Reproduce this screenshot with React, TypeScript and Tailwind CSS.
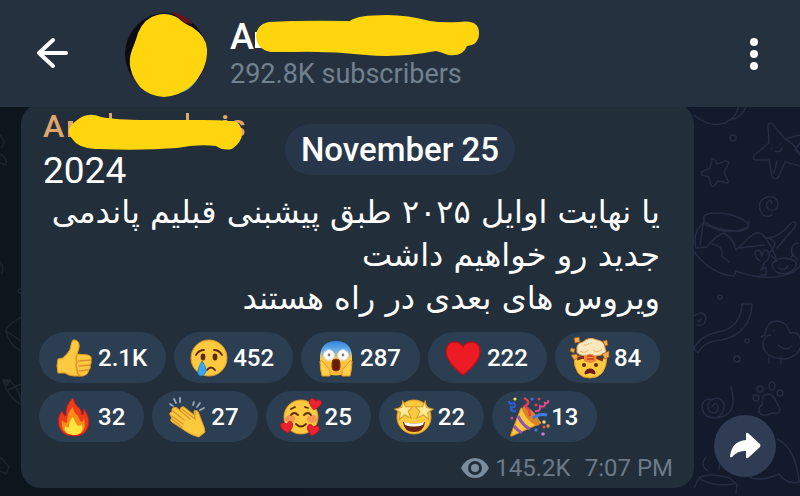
import type { ReactNode } from "react";

const Emoji = ({ children }: { children: ReactNode }) => (
  <svg viewBox="0 0 38 38" className="size-[38px] shrink-0 overflow-visible" aria-hidden="true">
    {children}
  </svg>
);

const gold = "#fcc93f";
const edge = "#e59a24";
const brown = "#5c2b12";

const Thumb = () => (
  <Emoji>
    <path d="M3 20Q8 20 11 16Q16 11 16 6Q17 0 20 1Q25 2 24 9Q23 13 22 15L33 16Q37 17 36 21Q37 24 35 26Q36 29 34 31Q33 36 28 37L19 37Q14 37 10 34L3 34Q1 27 3 20Z" fill={gold} stroke={edge} strokeWidth="1" />
    <path d="M35 21L24 22M35 26L24 27M33 31L24 32M22 16Q20 20 22 23Q20 27 22 29Q21 34 25 37" stroke="#dc8f2a" strokeWidth="1.4" fill="none" strokeLinecap="round" />
  </Emoji>
);

const Cry = () => (
  <Emoji>
    <circle cx="19" cy="19" r="18" fill={gold} stroke={edge} strokeWidth="1" />
    <path d="M6 16Q9 11 14 11M24 11Q29 11 32 16" stroke={brown} strokeWidth="1.8" fill="none" strokeLinecap="round" />
    <ellipse cx="13" cy="18" rx="2.4" ry="3.4" fill={brown} />
    <ellipse cx="25" cy="18" rx="2.4" ry="3.4" fill={brown} />
    <path d="M17 31Q21 26 25 31" stroke={brown} strokeWidth="2" fill="none" strokeLinecap="round" />
    <path d="M12 22Q17 29 16 33Q14 37 11 37Q7 36 8 31Q9 27 12 22Z" fill="#3da5e8" stroke="#1c7fc0" strokeWidth="0.8" />
  </Emoji>
);

const Scream = () => (
  <Emoji>
    <defs>
      <linearGradient id="scream" x1="0" y1="0" x2="0" y2="1">
        <stop offset="0" stopColor="#2f86e4" />
        <stop offset="0.28" stopColor="#6daee8" />
        <stop offset="0.5" stopColor="#fbc94a" />
        <stop offset="1" stopColor="#f9b934" />
      </linearGradient>
    </defs>
    <path d="M19 2Q33 2 35 16Q36 26 29 34Q19 39 9 34Q2 26 3 16Q5 2 19 2Z" fill="url(#scream)" />
    <circle cx="12" cy="16" r="5.3" fill="#fff" stroke="#d6dfe5" />
    <circle cx="26" cy="16" r="5.3" fill="#fff" stroke="#d6dfe5" />
    <circle cx="12" cy="16" r="1.4" fill="#8a7a70" />
    <circle cx="26" cy="16" r="1.4" fill="#8a7a70" />
    <rect x="15" y="20" width="8" height="12" rx="4" fill="#651d0c" stroke="#923413" />
    <path d="M3 22Q6 21 7 24L10 28Q13 29 13 33L13 37L5 37Q3 30 3 22ZM35 22Q32 21 31 24L28 28Q25 29 25 33L25 37L33 37Q35 30 35 22Z" fill="#ffcf4c" stroke={edge} strokeWidth="1" />
  </Emoji>
);

const Heart = () => (
  <Emoji>
    <path d="M19 36Q2 23 2 12Q3 3 11 3Q16 3 19 8Q22 3 28 3Q36 4 36 12Q36 23 19 36Z" fill="#ed1c24" stroke="#ba1119" strokeWidth="1.4" />
  </Emoji>
);

const Mindblown = () => (
  <Emoji>
    <path d="M3 18Q3 39 19 39Q35 39 36 18L29 21L24 17L16 20L9 17Z" fill={gold} stroke={edge} />
    <path d="M6 20L12 18L17 21L25 18L32 21" stroke="#7a2d12" strokeWidth="3" fill="none" />
    <path d="M13 14L26 14L25 22L20 24L13 22Z" fill="#f0863a" />
    <path d="M16 17L23 17M16 20L23 20" stroke="#ca3c22" strokeWidth="1.6" />
    <path d="M6 11Q5 4 12 3Q18-3 26 1Q34 2 34 9Q37 15 30 16Q24 18 19 15Q12 18 8 15Q5 14 6 11Z" fill="#fbe7be" stroke="#e0a052" />
    <path d="M9 12Q14 15 17 11M22 11Q27 15 31 10M13 6Q17 7 18 4" stroke="#edb76b" fill="none" />
    <path d="M3-1L8-2L9 3L4 4ZM32 2L36 1L37 6L34 7ZM0 9L4 10L3 14L-1 12ZM0 16L6 15L7 19L3 21ZM31 15L38 12L38 18L34 20Z" fill="#efae45" stroke="#a45418" strokeWidth="0.7" />
    <circle cx="13" cy="26" r="2" fill={brown} />
    <circle cx="25" cy="26" r="2" fill={brown} />
    <path d="M14 35Q14 30 19 30Q24 30 24 35Q19 32 14 35Z" fill="#701b14" stroke="#5b1410" />
  </Emoji>
);

const Fire = () => (
  <Emoji>
    <path d="M18 0Q19 6 25 11Q27 14 27 17Q29 16 29 11Q36 21 33 29Q30 38 19 38Q7 38 4 28Q2 19 7 13Q8 17 11 18Q10 7 18 0Z" fill="#ed3c1b" stroke="#c91b16" />
    <path d="M18 9Q18 14 23 18Q25 22 26 24Q29 23 29 20Q33 36 19 37Q5 36 7 22Q9 25 12 25Q12 14 18 9Z" fill="#fb8c16" />
    <path d="M18 19Q20 25 23 28Q26 28 27 26Q29 37 19 37Q8 36 10 28Q13 30 14 29Q14 23 18 19Z" fill="#ffe542" />
  </Emoji>
);

const Clap = () => (
  <Emoji>
    <path d="M4 11Q6 8 9 10L12 13Q12 8 16 9L26 17L26 13Q30 11 31 16L36 29L37 34L31 39Q23 37 19 34L4 24Q1 22 4 20L2 17Q1 14 4 14Z" fill={gold} stroke={edge} />
    <path d="M5 13L16 22M4 18L15 26M9 10L22 21M14 11L27 21Q26 16 28 14M4 21L14 29" stroke="#dd922e" strokeWidth="1.3" fill="none" strokeLinecap="round" />
    <path d="M2 6L5 8M6 1L8 5M12 0L12 4M25 7L26 4M29 9L32 5M32 12L36 10" stroke="#9aa9b6" strokeWidth="1.8" strokeLinecap="round" />
  </Emoji>
);

const smallHeart = "M0 6Q-7 1-6-3Q-4-7 0-3Q4-7 6-3Q7 1 0 6Z";

const Adore = () => (
  <Emoji>
    <circle cx="19" cy="19" r="17" fill={gold} stroke={edge} />
    <ellipse cx="8" cy="21" rx="5" ry="4" fill="#f4805b" opacity="0.7" />
    <ellipse cx="30" cy="21" rx="5" ry="4" fill="#f4805b" opacity="0.7" />
    <path d="M9 17Q12 13 16 17M22 17Q26 13 29 17M14 26Q19 31 24 26M9 11L13 9M23 9L26 10" stroke={brown} strokeWidth="1.8" fill="none" strokeLinecap="round" />
    <g fill="#ea2231" stroke="#b8101c" strokeWidth="0.7">
      <path d={smallHeart} transform="translate(33 6) rotate(12)" />
      <path d={smallHeart} transform="translate(5 29) rotate(-10)" />
      <path d={smallHeart} transform="translate(31 32) rotate(12)" />
    </g>
  </Emoji>
);

const star = "M0-9L2-3L9-2L4 2L6 9L0 5L-6 9L-4 2L-9-2L-2-3Z";

const StarStruck = () => (
  <Emoji>
    <circle cx="19" cy="19" r="17" fill={gold} stroke={edge} />
    <path d="M8 24Q19 27 30 24Q29 34 19 34Q9 34 8 24Z" fill="#6b210f" />
    <path d="M9 24Q19 27 29 24L28 27Q19 30 10 27Z" fill="#fff" />
    <g fill="#ffe995" stroke="#d79a25">
      <path d={star} transform="translate(9 12) rotate(-8)" />
      <path d={star} transform="translate(29 12) rotate(8)" />
    </g>
  </Emoji>
);

const Party = () => (
  <Emoji>
    <path d="M4 38Q2 39 3 36L13 10Q25 13 33 25Z" fill="#f9c73e" stroke="#df8c25" />
    <path d="M10 18Q15 28 22 31M6 28Q10 33 14 35" stroke="#9554ad" strokeWidth="3" fill="none" />
    <ellipse cx="23" cy="18" rx="12" ry="4.5" transform="rotate(48 23 18)" fill="#dd8128" />
    <path d="M22 18Q22 11 17 8Q24 4 16 0" stroke="#e34055" strokeWidth="2.5" fill="none" />
    <path d="M25 20Q31 15 39 17" stroke="#3e7ee2" strokeWidth="3" fill="none" />
    <path d="M8 13Q2 14 3 9Q9 10 6 5Q1 7 1 3" stroke="#315bd0" strokeWidth="2.3" fill="none" />
    <path d="M27 13Q33 14 32 8Q38 10 37 5Q41 6 40 2" stroke="#dc4889" strokeWidth="2.1" fill="none" />
    <g>
      <circle cx="7" cy="1" r="1.6" fill="#efe45e" />
      <circle cx="24" cy="1" r="1.5" fill="#4275dc" />
      <circle cx="31" cy="1" r="1.5" fill="#cb426b" />
      <circle cx="28" cy="7" r="1.5" fill="#e34055" />
      <circle cx="4" cy="20" r="1.6" fill="#c34793" />
      <circle cx="36" cy="24" r="1.8" fill="#e9d96b" />
      <circle cx="40" cy="28" r="1.7" fill="#e5943f" />
      <circle cx="36" cy="29" r="1.5" fill="#e05252" />
      <circle cx="28" cy="32" r="1.7" fill="#3c73dc" />
      <circle cx="35" cy="36" r="1.8" fill="#b87ad4" />
    </g>
  </Emoji>
);

const reactions = [
  [
    { name: "Thumbs up", count: "2.1K", icon: <Thumb /> },
    { name: "Crying", count: "452", icon: <Cry /> },
    { name: "Screaming", count: "287", icon: <Scream /> },
    { name: "Heart", count: "222", icon: <Heart /> },
    { name: "Mind blown", count: "84", icon: <Mindblown /> },
  ],
  [
    { name: "Fire", count: "32", icon: <Fire /> },
    { name: "Clapping", count: "27", icon: <Clap /> },
    { name: "Adoring", count: "25", icon: <Adore /> },
    { name: "Star-struck", count: "22", icon: <StarStruck /> },
    { name: "Party", count: "13", icon: <Party /> },
  ],
];

const RightDoodles = () => (
  <svg viewBox="0 0 106 388" className="absolute top-0 right-0 h-[388px] w-[106px]" fill="none" stroke="#252d43" strokeWidth="1.5" strokeLinecap="round" strokeLinejoin="round" aria-hidden="true">
    <path d="M0 8Q15 21 31 16Q43 10 44 0M37 13Q48 10 52 0" />
    <circle cx="39" cy="31" r="3" />
    <path d="M74 18Q77 14 80 19L91 32L106 28M74 18L75 36L60 48Q57 53 63 53L75 53L78 69Q81 75 85 69L91 55L106 59M91 32Q101 37 106 48M83 54L80 66" />
    <path d="M78 41L78 42M87 36L87 37M81 44Q87 46 88 41M106 36L101 43L106 47" />
    <path d="M18 52Q21 51 23 57L31 54Q36 54 34 58L30 65L34 74Q35 77 30 75L24 74L20 79Q17 81 16 75L15 70L8 68Q6 65 10 64L16 61Z" />
    <path d="M77 97Q79 93 75 94Q70 98 75 103Q83 105 84 97Q83 88 73 90Q62 94 67 105Q71 112 78 108" />
    <ellipse cx="32" cy="115" rx="23" ry="8" transform="rotate(11 32 115)" />
    <path d="M10 111Q8 118 15 119Q35 129 54 120L55 114M9 116Q-2 126 2 141L13 140Q22 128 30 126Q40 132 42 143L57 129Q66 121 73 133Q80 143 83 154M0 145Q19 168 40 169L42 164Q65 173 88 169Q100 166 106 159M18 137Q30 139 28 149L35 155M9 117L6 138M44 141L70 138M73 131Q85 131 97 116Q103 112 101 120L83 141M70 130Q88 133 76 145" />
    <path d="M66 154Q60 150 61 145Q66 140 68 149Q70 139 75 146Q76 152 70 156L67 163L72 160L72 168L66 168M104 153L98 147Q96 137 104 136M78 157Q86 147 101 154Q106 160 94 166Q80 169 78 157M81 152L78 149M97 151L99 147M85 161Q90 165 94 159" />
    <circle cx="26" cy="190" r="2" />
    <path d="M0 209Q9 202 12 211Q11 220 3 218M7 212Q4 217 4 213M0 242L4 246Q10 234 28 233Q57 226 58 197L48 197Q47 218 29 224Q5 228 0 242" />
    <path d="M67 230L71 228Q72 215 82 214Q93 214 96 226Q107 223 107 239Q104 250 91 252Q68 251 69 235Q71 228 77 228M80 223L80 224M84 238Q92 245 98 239M75 250L75 256M87 251L87 257" />
    <circle cx="53" cy="234" r="2" />
    <circle cx="43" cy="252" r="3" />
    <path d="M18 300Q22 293 24 300Q24 308 16 305Q11 298 17 293Q26 288 30 297Q31 307 22 311Q10 311 8 301Q8 292 16 292M22 311Q45 309 37 280" />
    <circle cx="66" cy="282" r="3" />
    <ellipse cx="78" cy="279" rx="3" ry="4" />
    <circle cx="86" cy="286" r="3" />
    <circle cx="62" cy="291" r="3" />
    <path d="M69 289Q76 284 81 292L86 302Q86 308 78 306Q69 311 65 305Q64 300 68 298Z" />
    <path d="M83 332Q102 341 105 375Q93 378 85 367Q60 378 50 365M0 381L5 371Q13 365 36 371L43 378L42 386M5 371Q16 380 40 377M14 364Q5 358 12 350M25 363Q25 354 31 352" />
  </svg>
);

const LeftDoodles = () => (
  <svg viewBox="0 0 24 388" className="absolute top-0 left-0 h-[388px] w-6" fill="none" stroke="#1c252e" strokeWidth="1.5" aria-hidden="true">
    <path d="M0 28Q7 35 1 41M0 47Q8 52 6 58L0 56M0 154Q5 162 1 167M24 209Q7 217 6 224Q9 238 21 244M6 224L21 234M3 273Q18 273 22 298M3 273Q8 291 22 298M8 283L21 277M0 350L9 360L6 367L0 364" />
    <path d="M3 273L10 273L6 280Z" fill="#1c252e" />
    <circle cx="20" cy="184" r="2" />
  </svg>
);

export default function App() {
  return (
    <div className="flex min-h-screen flex-col overflow-hidden bg-[#11192a] font-['Roboto',sans-serif] text-white">
      <header className="z-10 flex h-[107px] items-center bg-[#263140] pr-7 pl-9">
        <button aria-label="Back" className="size-9 shrink-0">
          <svg viewBox="0 0 36 36" className="size-9" fill="none" stroke="white" strokeWidth="4" strokeLinecap="round" strokeLinejoin="round">
            <path d="M17 4L3 17L17 30M3 17H30" />
          </svg>
        </button>
        <svg viewBox="0 0 84 86" className="ml-[52px] h-[86px] w-[84px] shrink-0" role="img" aria-label="Channel photo">
          <circle cx="42" cy="43" r="41" fill="#0d0c12" />
          <path d="M47 1Q61 3 69 13L61 12Z" fill="#65161b" />
          <path d="M75 66Q65 82 53 82Z" fill="#62b7a5" />
          <path d="M15 75Q8 68 6 59Z" fill="#4e2023" />
          <path d="M16 76Q25 85 40 86Q56 85 68 74Q84 58 83 38Q82 25 68 16Q59 12 54 7Q44 1 33 4Q20 7 14 22Q12 29 8 39Q1 57 16 76Z" fill="#ffd60d" />
        </svg>
        <div className="ml-[22px] min-w-0 flex-1">
          <h1 className="relative text-[36px] leading-10 font-medium">
            A
            <svg viewBox="0 0 228 44" className="absolute -top-0.5 left-6 h-11 w-[228px]" aria-hidden="true">
              <path d="M1 17h6v16h-6zM146 36h6l-2 4h-4z" fill="white" />
              <path d="M15 7Q48 5 96 6Q103 0 133 0Q154 0 176 6Q188 8 205 7Q225 4 225 18Q225 30 213 31Q209 42 194 40Q187 37 182 36Q145 43 112 40Q75 36 39 37L17 37Q3 35 2 21Q3 9 15 7Z" fill="#ffd60d" />
            </svg>
          </h1>
          <p className="text-[27px] leading-[34px] text-[#71818f]">292.8K subscribers</p>
        </div>
        <button aria-label="More options" className="flex h-9 w-9 shrink-0 flex-col items-center justify-between py-0.5">
          <span className="size-2 rounded-full bg-white" />
          <span className="size-2 rounded-full bg-white" />
          <span className="size-2 rounded-full bg-white" />
        </button>
      </header>

      <main className="relative flex flex-1 items-end bg-linear-to-r from-[#0e161d] from-5% to-[#121a2b] to-85% pr-6 pb-2 pl-[21px]">
        <LeftDoodles />
        <RightDoodles />
        <time className="absolute top-[17px] left-1/2 z-10 -translate-x-1/2 rounded-full bg-[#28364a] px-4 text-[33px] leading-[51px] font-medium whitespace-nowrap">November 25</time>

        <article className="relative -mt-1 mr-5 flex min-w-0 flex-1 flex-col rounded-[20px] bg-[#222e3a] px-[18px] pb-1">
          <div className="pr-4 pl-1">
            <h2 className="relative h-[47px] pt-0.5 text-[32px] leading-10 font-medium text-[#dfa66b]">
              A
              <span className="absolute top-0.5 left-[178px]">is</span>
              <svg viewBox="0 0 178 38" className="absolute top-2 left-[25px] h-[38px] w-[178px]" aria-hidden="true">
                <path d="M-1 9h6v16h-6zM41 1h3v9h-3zM118 1h3v9h-3z" fill="#dfa66b" />
                <path d="M8 9Q19-1 33 5Q48 8 78 8L135 8Q150 8 161 9Q171 8 173 16Q177 28 164 37Q155 39 148 34Q129 32 109 36Q70 39 32 37Q13 37 6 29Q-5 18 8 9Z" fill="#ffd60d" />
              </svg>
            </h2>
            <p className="text-[37px] leading-10">2024</p>
            <p dir="rtl" lang="fa" className="font-['DejaVu_Sans',sans-serif] text-[32px] leading-[43px]">
              یا نهایت اوایل ۲۰۲۵ طبق پیشبنی قبلیم پاندمی جدید رو خواهیم داشت
              <br />
              ویروس های بعدی در راه هستند
            </p>
          </div>
          <div className="mt-3 flex flex-col gap-2">
            {reactions.map((row, i) => (
              <div key={i} className="flex gap-2">
                {row.map((r) => (
                  <button key={r.name} aria-label={r.name + " " + r.count} className="flex h-[51px] items-center gap-[5px] rounded-full bg-[#2c3e52] pr-[19px] pl-4 text-[24px] font-medium">
                    {r.icon}
                    <span>{r.count}</span>
                  </button>
                ))}
              </div>
            ))}
          </div>
          <footer className="mt-2.5 flex items-center justify-end pr-[3px] text-[24px] leading-8 text-[#6c7a88]">
            <svg viewBox="0 0 28 20" className="mr-1.5 h-5 w-7" fill="#7b8c9c" aria-hidden="true">
              <path fillRule="evenodd" d="M14 0Q23 0 28 10Q23 20 14 20Q5 20 0 10Q5 0 14 0ZM14 3A7 7 0 1 0 14 17A7 7 0 1 0 14 3Z" />
              <circle cx="14" cy="10" r="4" />
            </svg>
            <span>145.2K</span>
            <span className="ml-3.5">7:07 PM</span>
          </footer>
        </article>

        <button aria-label="Share" className="relative mb-[11px] flex size-[62px] shrink-0 items-center justify-center rounded-full bg-[#303c53]">
          <svg viewBox="0 0 32 28" className="h-7 w-8" fill="white">
            <path d="M17 2Q17 0 19 1L31 12Q32 13 31 15L19 26Q17 27 17 25V19Q9 18 3 25Q1 26 1 24Q3 9 17 8Z" />
          </svg>
        </button>
      </main>
    </div>
  );
}
